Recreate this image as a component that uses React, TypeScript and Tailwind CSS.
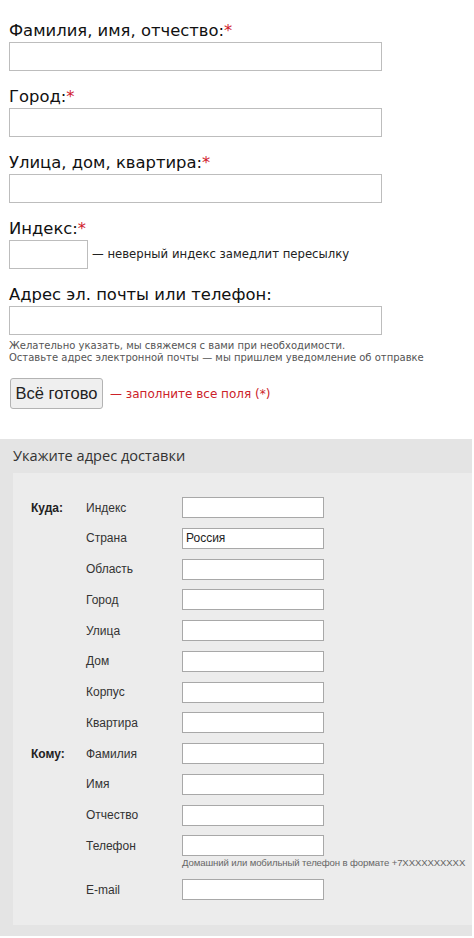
import React from "react";

const top = { fontFamily: '"DejaVu Sans", Verdana, sans-serif' };
const low = { fontFamily: '"Liberation Sans", Arial, sans-serif' };

function Label({ text, req = true }: { text: string; req?: boolean }) {
  return (
    <div className="h-[20px] text-[16.4px] leading-[20px] text-[#111]">
      {text}
      {req && <span className="text-[#d0202c]">*</span>}
    </div>
  );
}

function BigInput() {
  return (
    <input
      type="text"
      className="mt-[1px] block h-[29px] w-[373px] border border-[#bdbdbd] bg-white outline-none"
    />
  );
}

const rows1 = ["Индекс", "Страна", "Область", "Город", "Улица", "Дом", "Корпус", "Квартира"];
const rows2 = ["Фамилия", "Имя", "Отчество"];

function SmallInput({ value = "" }: { value?: string }) {
  return (
    <input
      type="text"
      defaultValue={value}
      className="block h-[21px] w-[142px] border border-[#a8a8a8] bg-white px-[3px] text-[12px] text-[#222] outline-none"
      style={low}
    />
  );
}

function Row({ head, label, value }: { head?: string; label: string; value?: string }) {
  return (
    <>
      <div className="flex h-[21px] items-center text-[12px] font-bold text-[#222]">{head}</div>
      <div className="flex h-[21px] items-center text-[12px] text-[#333]">{label}</div>
      <div>
        <SmallInput value={value} />
      </div>
    </>
  );
}

export default function App() {
  return (
    <div className="min-h-[938px] w-[474px] bg-white">
      <div className="pl-[9px] pt-[21px]" style={top}>
        <Label text="Фамилия, имя, отчество:" />
        <BigInput />
        <div className="mt-[16px]">
          <Label text="Город:" />
          <BigInput />
        </div>
        <div className="mt-[16px]">
          <Label text="Улица, дом, квартира:" />
          <BigInput />
        </div>
        <div className="mt-[16px]">
          <Label text="Индекс:" />
          <div className="mt-[1px] flex items-center gap-[4px]">
            <input
              type="text"
              className="block h-[29px] w-[79px] border border-[#bdbdbd] bg-white outline-none"
            />
            <span className="text-[11.7px] text-[#222]">— неверный индекс замедлит пересылку</span>
          </div>
        </div>
        <div className="mt-[16px]">
          <Label text="Адрес эл. почты или телефон:" req={false} />
          <BigInput />
          <div className="mt-[5px] text-[10px] leading-[12px] text-[#555]">
            <div>Желательно указать, мы свяжемся с вами при необходимости.</div>
            <div>Оставьте адрес электронной почты — мы пришлем уведомление об отправке</div>
          </div>
        </div>
        <div className="mt-[14px] flex items-center gap-[7px]">
          <button
            className="ml-[1px] h-[31px] w-[93px] rounded-[3px] border border-[#b3b3b3] bg-[#efefef] text-[16.5px] text-[#222]"
            style={low}
          >
            Всё готово
          </button>
          <span className="text-[12px] text-[#cc2229]">— заполните все поля (*)</span>
        </div>
      </div>

      <div className="mt-[30px] mr-[2px] bg-[#e4e4e4] pb-[11px]" style={low}>
        <div className="flex h-[34px] items-center pl-[13px] text-[14.6px] text-[#333]" style={{ fontFamily: '"Open Sans", "Noto Sans", sans-serif' }}>
          Укажите адрес доставки
        </div>
        <div className="ml-[13px] bg-[#ececec] pb-[25px] pl-[18px] pt-[24px]">
          <div className="grid grid-cols-[55px_96px_1fr] gap-y-[9.75px]">
            {rows1.map((r, i) => (
              <Row key={r} head={i === 0 ? "Куда:" : undefined} label={r} value={r === "Страна" ? "Россия" : ""} />
            ))}
            {rows2.map((r, i) => (
              <Row key={r} head={i === 0 ? "Кому:" : undefined} label={r} />
            ))}
            <div className="h-[21px]" />
            <div className="flex h-[21px] items-center text-[12px] text-[#333]">Телефон</div>
            <div>
              <SmallInput />
              <div className="mt-[1px] h-[12px] whitespace-nowrap text-[9.6px] leading-[12px] tracking-[-0.12px] text-[#666]">
                Домашний или мобильный телефон в формате +7XXXXXXXXXX
              </div>
            </div>
            <div className="h-[21px]" />
            <div className="flex h-[21px] items-center text-[12px] text-[#333]">E-mail</div>
            <div>
              <SmallInput />
            </div>
          </div>
        </div>
      </div>
    </div>
  );
}
